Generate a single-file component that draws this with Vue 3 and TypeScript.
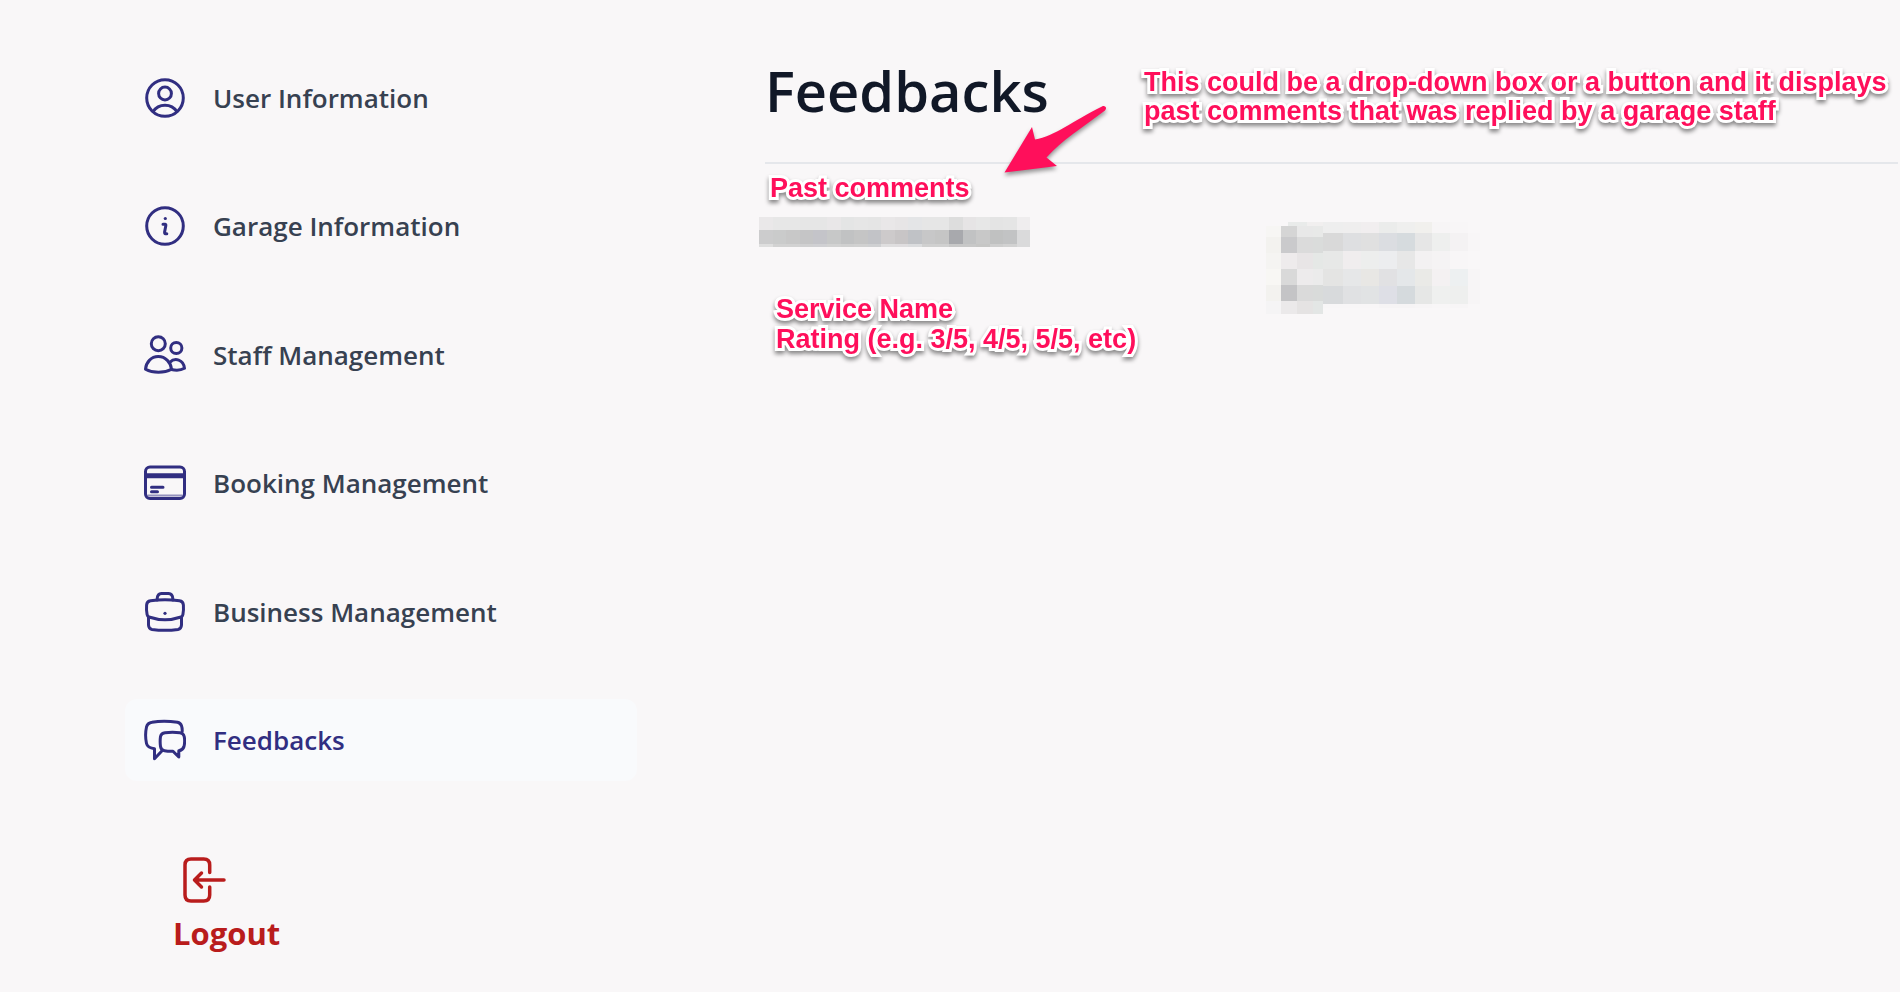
<script setup lang="ts">
interface NavItem {
  label: string
  icon: string
}

interface Cell {
  x: number
  y: number
  w: number
  h: number
  fill: string
}

const items: NavItem[] = [
  { label: 'User Information', icon: 'user' },
  { label: 'Garage Information', icon: 'info' },
  { label: 'Staff Management', icon: 'staff' },
  { label: 'Booking Management', icon: 'card' },
  { label: 'Business Management', icon: 'case' },
  { label: 'Feedbacks', icon: 'chat' },
]
const active = 'Feedbacks'

function cells(xs: number[], ys: number[], rows: string[]): Cell[] {
  return rows.flatMap((row, r) =>
    row.split(' ').map((c, i) => ({
      x: xs[i],
      y: ys[r],
      w: xs[i + 1] - xs[i],
      h: ys[r + 1] - ys[r],
      fill: '#' + c,
    })),
  )
}

const nameXs = [0, 14, 27, 41, 54, 68, 82, 95, 109, 122, 136, 149, 163, 176, 190, 204, 217, 231, 244, 258, 271]
const nameMosaic = cells(nameXs, [0, 13, 27, 30], [
  'eae8e9 e7e7e7 e7e7e7 e6e6e6 e6e6e6 e9e7e8 e4e5e5 e6e6e6 e5e5e5 e9e7e8 e7e5e6 e4e5e7 e6e6e6 e6e6e6 dddddd e6e4e5 e7e7e7 e4e4e4 e5e5e5 efedee',
  'cccccd cacbcb c8c8c8 c5c5c6 c4c4c9 c7c8c8 c1c2c3 c5c5c5 c2c3c7 cdcacb c8c5c6 c0c2c6 c7c7c8 c5c5c5 a8a9ad c1c2c3 c8c8c8 c0c1c1 c2c3c4 dadadb',
  'dedede d2d2d2 d2d2d2 d0d0d1 d0d0d3 d2d2d2 d0d0d0 d1d1d1 cfd0d2 dfdedf dfdddf dbdcde d0d0d0 d0d0d0 c8c8c8 c8c8c8 c6c6c5 cecece d2d2d2 dadadb',
])

const bodyMosaic = [
  ...cells([22, 41, 57], [0, 4], ['e9ebea f1efef']),
  ...cells([0, 15, 31, 47, 57], [4, 15, 31, 47, 63, 79, 92], [
    'f7f6f4 d5d5d5 e8e8e8 e8e9e8',
    'f3f2ef cacacc dbdbdb dadcdb',
    'f5f4f2 eeebec e8e5e6 e5e8e6',
    'f8f7f4 d9d9d9 edebec ebebeb',
    'f3f2ef c4c4c6 dadada d9dbda',
    'f5f4f5 ebe9ea e5e3e3 e3e6e5',
  ]),
  ...cells([57, 77, 95, 113, 131, 149, 166, 184, 202, 214], [0, 11, 29, 47, 64, 82, 86], [
    'eeeeee efeeee f1eeef ebeceb efefee f1f0ed f7f5f6 f8f6f7 f9f7f8',
    'd9d9d9 dedfe1 e0e0e0 dbdde1 d6dbde e6e6e6 eeefee f4f2f3 f8f6f7',
    'e7e8e7 f0edee edeeed ecedef e7e7e7 f3f1f2 f5f3f4 f8f6f7 f9f7f8',
    'e4e4e3 e6e7e8 e8e7e4 e1e1e3 e4e7e9 eaeae7 f4f1f2 edf0f1 f7f5f6',
    'd8dadc e0e1e3 e1e3e4 dedfe6 d5dadd e6e7e6 eff0ef eeefee f7f5f6',
    'f8f6f7 f8f6f7 f8f6f7 f6f4f5 f6f4f5 f7f5f6 f8f6f7 f7f5f6 f9f7f8',
  ]),
]
</script>

<template>
  <div class="page">
    <aside class="sidebar">
      <nav class="menu" aria-label="Account">
        <a
          v-for="item in items"
          :key="item.label"
          href="#"
          class="item"
          :class="{ active: item.label === active }"
        >
          <svg class="icon" viewBox="0 0 42 42" aria-hidden="true">
            <g v-if="item.icon === 'user'">
              <circle cx="21" cy="21" r="18.3" />
              <circle cx="21" cy="16.5" r="6.4" />
              <path d="M9.2 34.5C12 30 16.200 28.200 21 28.200S30 30 32.800 34.500" />
            </g>
            <g v-else-if="item.icon === 'info'">
              <circle cx="21" cy="21" r="18.3" />
              <path d="M19 19.200h2.100q.9.200.7 1.500L20.600 27q-.1 1.500 1 1.700h1.200" />
              <circle class="dot" cx="21.300" cy="13.500" r="1.600" />
            </g>
            <g v-else-if="item.icon === 'staff'">
              <circle cx="14.300" cy="9.700" r="7" />
              <circle cx="32.300" cy="14" r="5.600" />
              <path d="M1.500 35.200C2 28.500 7 22.600 14.300 22.600S26.800 28.500 27.500 35.200C20 39.300 9 39.300 1.500 35.200Z" />
              <path d="M25.800 28.300C31 23.300 39.500 25.500 40.500 34.300C36.500 36.600 32 36.700 27.400 35.500" />
            </g>
            <g v-else-if="item.icon === 'card'">
              <rect x="1.500" y="5" width="39" height="31.500" rx="4.500" />
              <path class="band" d="M2 13.700h38" />
              <path class="faint" d="M4 33.500h34" />
              <path d="M7.500 25.300h11.500M7.500 29.800h6" />
            </g>
            <g v-else-if="item.icon === 'case'">
              <path d="M13.200 9V7.500Q13.500 3 17.500 2.600Q21 2.200 24.500 2.600Q28.500 3 28.800 7.500V9" />
              <path d="M6.500 9.700Q21 8 35.500 9.700Q39.200 10.200 39.400 14Q39.800 19 38.900 23.500Q38.600 25.400 37 26Q21 31.500 5 26Q3.400 25.400 3.100 23.500Q2.200 19 2.600 14Q2.800 10.200 6.500 9.700Z" />
              <path d="M4.500 26V34Q4.700 37.800 8 38.400Q21 40.200 34 38.400Q37.300 37.800 37.500 34V26" />
              <circle class="dot" cx="21" cy="22.300" r="1.600" />
            </g>
            <g v-else>
              <path d="M38.200 12.500Q38.400 9.500 37.500 6.800Q36.500 4 33.500 3.300Q19.500 1 8 3.300Q3.600 4 2.500 8Q.7 16 2.500 24.500Q3.500 28.800 10.500 29.700V39.700L18.300 31.500" />
              <path d="M21 13.800Q28.500 12.700 36 13.800Q39.400 14.300 40.200 17.500Q41.200 22.500 40 27.500Q39 31 34.800 31.800V38L29 32.200Q25 32.500 20.500 31.700Q17 31 16.500 27.500Q15.800 22.500 16.500 17.500Q17.200 14.300 21 13.800Z" />
            </g>
          </svg>
          <span>{{ item.label }}</span>
        </a>
      </nav>
      <button type="button" class="logout">
        <svg class="exit" viewBox="0 0 44 48" aria-hidden="true">
          <path d="M27.700 16.500V9Q27.700 3 21.700 3H9Q3 3 3 9V39Q3 45 9 45H21.700Q27.700 45 27.700 39V31" />
          <path d="M42 24H12.500M19.500 17L12.500 24L19.500 31" />
        </svg>
        <span>Logout</span>
      </button>
    </aside>

    <main class="content">
      <header class="head">
        <h1>Feedbacks</h1>
        <p class="note">
          This could be a drop-down box or a button and it displays<br />
          past comments that was replied by a garage staff
        </p>
        <svg class="arrow" viewBox="0 0 110 76" aria-hidden="true">
          <path d="M4.500 69.500L32 24L35 36.500C55 33 72 18.500 102 3.500C105 2 107.500 5 105 7.500C82 25 62 37 46.500 54.500L57 63Z" />
        </svg>
      </header>
      <h2 class="note past">Past comments</h2>
      <div class="row">
        <div class="summary">
          <svg class="mosaic" width="271" height="30" viewBox="0 0 271 30" shape-rendering="crispEdges" aria-hidden="true">
            <rect v-for="(c, i) in nameMosaic" :key="i" :x="c.x" :y="c.y" :width="c.w" :height="c.h" :fill="c.fill" />
          </svg>
          <p class="note service">Service Name<br />Rating (e.g. 3/5, 4/5, 5/5, etc)</p>
        </div>
        <svg class="mosaic body" width="214" height="92" viewBox="0 0 214 92" shape-rendering="crispEdges" aria-hidden="true">
          <rect v-for="(c, i) in bodyMosaic" :key="i" :x="c.x" :y="c.y" :width="c.w" :height="c.h" :fill="c.fill" />
        </svg>
      </div>
    </main>
  </div>
</template>

<style>
body {
  margin: 0;
  background: #f9f7f8;
}
</style>

<style scoped>
.page {
  display: grid;
  grid-template-columns: minmax(0, 512px) minmax(0, 1fr);
  column-gap: 128px;
  min-height: 100vh;
  padding-left: 125px;
  box-sizing: border-box;
  overflow: hidden;
  background: #f9f7f8;
  font-family: "Open Sans", "Noto Sans", sans-serif;
}
.sidebar {
  padding-top: 57px;
}
.menu {
  display: flex;
  flex-direction: column;
  justify-content: space-between;
  min-height: 73vh;
}
.item {
  display: flex;
  align-items: center;
  gap: 27px;
  height: 82px;
  padding: 0 19px;
  box-sizing: border-box;
  border-radius: 12px;
  color: #374151;
  font-size: 26px;
  font-weight: 600;
  text-decoration: none;
  white-space: nowrap;
}
.item.active {
  background: #f9fafc;
  color: #312e81;
}
.icon {
  flex: none;
  width: 42px;
  height: 42px;
  fill: none;
  stroke: #312e81;
  stroke-width: 3;
  stroke-linecap: round;
  stroke-linejoin: round;
}
.icon .dot {
  fill: #312e81;
  stroke: none;
}
.icon .band {
  stroke-width: 5;
  stroke-linecap: butt;
}
.icon .faint {
  stroke-width: 2;
  stroke-opacity: 0.5;
}
.logout {
  display: flex;
  flex-direction: column;
  gap: 8px;
  margin: 75px 0 0 48px;
  padding: 0;
  border: 0;
  background: none;
  color: #b91c1c;
  font-family: inherit;
  font-size: 31px;
  font-weight: 700;
  line-height: 42px;
}
.exit {
  width: 44px;
  height: 48px;
  margin-left: 9px;
  fill: none;
  stroke: #b91c1c;
  stroke-width: 3.5;
  stroke-linecap: round;
  stroke-linejoin: round;
}
.content {
  min-width: 0;
}
.head {
  position: relative;
  display: grid;
  grid-template-columns: 379px minmax(0, 1fr);
  align-items: start;
  height: 162px;
  margin-right: 2px;
  border-bottom: 2px solid #e5e7eb;
}
h1 {
  margin: 0;
  padding-top: 50px;
  color: #111827;
  font-size: 56px;
  font-weight: 600;
  line-height: 80px;
}
.note {
  margin: 0;
  color: #ff0f5b;
  font-family: "Liberation Sans", Arial, sans-serif;
  font-size: 27px;
  font-weight: 700;
  line-height: 30px;
  white-space: nowrap;
  -webkit-text-stroke: 6px #ffffff;
  paint-order: stroke fill;
  stroke-linejoin: round;
  filter: drop-shadow(0 3px 2px rgba(0, 0, 0, 0.45));
}
.head .note {
  padding-top: 68px;
  line-height: 29px;
}
.arrow {
  position: absolute;
  left: 235px;
  top: 103px;
  width: 110px;
  height: 76px;
  fill: #ff0f5b;
  filter: drop-shadow(0 3px 2px rgba(0, 0, 0, 0.4));
  overflow: visible;
}
.past {
  padding: 9px 0 0 5px;
}
.row {
  display: grid;
  grid-template-columns: 501px minmax(0, 1fr);
  align-items: start;
  margin-top: 14px;
}
.mosaic {
  display: block;
  margin-left: -6px;
}
.mosaic.body {
  margin: 5px 0 0 0;
}
.service {
  padding: 47px 0 0 11px;
}
</style>
